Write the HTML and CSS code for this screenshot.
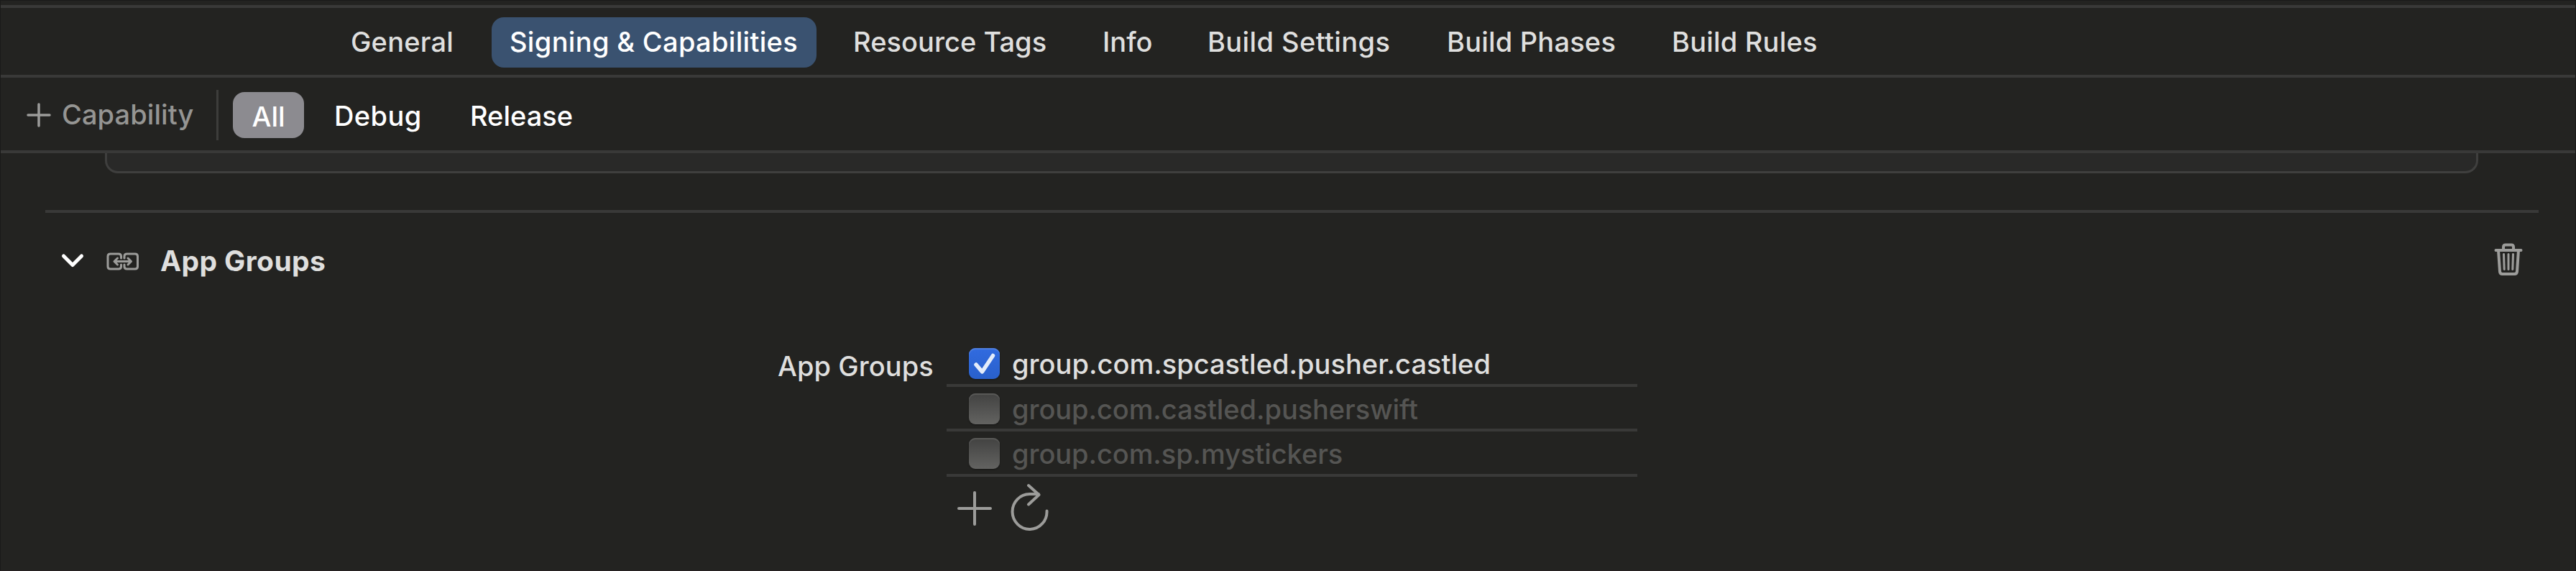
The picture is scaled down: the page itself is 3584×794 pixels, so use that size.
FILE: index.html
```html
<!DOCTYPE html>
<html lang="en">
<head>
<meta charset="utf-8">
<title>Signing &amp; Capabilities</title>
<link rel="stylesheet" href="styles.css">
</head>
<body>
<main class="window">
  <nav class="tabs">
    <span class="tab general">General</span>
    <span class="tab selected">Signing &amp; Capabilities</span>
    <span class="tab resource">Resource Tags</span>
    <span class="tab info">Info</span>
    <span class="tab settings">Build Settings</span>
    <span class="tab phases">Build Phases</span>
    <span class="tab rules">Build Rules</span>
  </nav>
  <div class="toolbar">
    <button class="add-capability">
      <svg width="34" height="34" viewBox="0 0 34 34"><path d="M17 2V32M2 17H32"/></svg>
      <span>Capability</span>
    </button>
    <i class="divider"></i>
    <span class="scope all">All</span>
    <span class="scope debug">Debug</span>
    <span class="scope">Release</span>
  </div>
  <div class="scroll">
    <div class="previous-card"></div>
    <section class="capability">
      <header class="heading">
        <svg class="chevron" width="34" height="24" viewBox="0 0 34 24"><path d="M4.5 5L17 17.5L29.500 5"/></svg>
        <svg class="link" width="46" height="26" viewBox="0 0 46 26">
          <path d="M20.500 8V5.500Q20.500 2 17 2H5.500Q2 2 2 5.500V19.500Q2 23 5.500 23H17Q20.500 23 20.500 19.500V17M25 8V5.500Q25 2 28.500 2H40Q43.500 2 43.500 5.500V19.500Q43.500 23 40 23H28.500Q25 23 25 19.500V17"/>
          <path d="M11 12.500H34.500M15.500 8L11 12.500L15.500 17M30 8L34.500 12.500L30 17"/>
        </svg>
        <h2>App Groups</h2>
        <svg class="trash" width="40" height="46" viewBox="0 0 40 46">
          <path class="frame" d="M2.500 10H37.500M13 10V5.500Q13 2.500 16 2.500H24Q27 2.500 27 5.500V10M6 10L8 39.500Q8.300 43 11.500 43H28.500Q31.700 43 32 39.500L34 10"/>
          <path class="ribs" d="M13.500 15.500L14.200 36.500M20 15.500V36.500M26.500 15.500L25.800 36.500"/>
        </svg>
      </header>
      <div class="form">
        <span class="label">App Groups</span>
        <div class="groups">
          <label class="group enabled">
            <span class="box checked"><svg width="43" height="43" viewBox="0 0 43 43"><path d="M10 23L18.500 33L33.500 10.500"/></svg></span>
            <span class="name">group.com.spcastled.pusher.castled</span>
          </label>
          <label class="group">
            <span class="box"></span>
            <span class="name">group.com.castled.pusherswift</span>
          </label>
          <label class="group">
            <span class="box"></span>
            <span class="name">group.com.sp.mystickers</span>
          </label>
          <div class="actions">
            <svg width="50" height="50" viewBox="0 0 50 50"><path d="M25 3V47M3 25H47"/></svg>
            <svg class="refresh" width="56" height="66" viewBox="0 0 56 66"><path d="M51.500 38.500A24 24.500 0 1 1 27.500 15H40M26 3L40.500 16L26 29.500"/></svg>
          </div>
        </div>
      </div>
    </section>
  </div>
</main>
</body>
</html>
```
FILE: styles.css
```css
* { box-sizing: border-box; }
body {
  margin: 0;
  background: #232321;
  color: #dfdfde;
  font: 500 38px/50px Inter, "Liberation Sans", sans-serif;
}
svg { display: block; flex: none; fill: none; stroke: #9c9c9a; stroke-width: 4; stroke-linecap: round; stroke-linejoin: round; }
.window { position: relative; height: 794px; padding-top: 7px; overflow: hidden; }
.window::after {
  content: "";
  position: absolute;
  inset: 0;
  border: 1px solid #1a1a19;
  border-bottom-color: #292123;
  pointer-events: none;
}

.tabs {
  display: grid;
  grid-template-columns: 196px 503px 347px 146px 333px 313px 300px;
  align-items: center;
  height: 101px;
  padding: 3px 0 0 488px;
  border-top: 4px solid #393938;
  border-bottom: 4px solid #393938;
}
.tab { height: 70px; line-height: 69px; white-space: nowrap; letter-spacing: .2px; }
.selected {
  width: 452px;
  padding-left: 25px;
  border-radius: 17px;
  background: #3a5270;
  color: #fff;
  letter-spacing: .32px;
}
.resource { letter-spacing: .04px; }
.info { letter-spacing: 0; }
.settings { letter-spacing: .4px; }

.toolbar {
  display: flex;
  align-items: center;
  height: 105px;
  padding: 0 0 1px 37px;
  border-bottom: 4px solid #393938;
  color: #fff;
}
.add-capability {
  display: flex;
  align-items: center;
  gap: 15px;
  width: 264px;
  margin: 0;
  padding: 0;
  border: 0;
  background: none;
  color: #959593;
  font: inherit;
  letter-spacing: .08px;
}
.add-capability span { margin-top: 2px; }
.add-capability svg { margin-top: 3px; stroke-width: 3.500; }
.divider { width: 3px; height: 70px; margin-top: 3px; background: #3d3d3b; }
.scope { margin-top: 6px; }
.all {
  width: 99px;
  height: 64px;
  margin: 3px 0 0 20px;
  border-radius: 16px;
  background: #8c8b90;
  line-height: 68px;
  text-align: center;
}
.debug { width: 189px; margin-left: 42px; letter-spacing: .4px; }

.previous-card {
  height: 28px;
  margin: 0 136px 0 146px;
  border: 3px solid #3f3f3e;
  border-top: 0;
  border-radius: 0 0 18px 18px;
  background: #292928;
}
.capability { margin: 51px 52px 0 63px; border-top: 4px solid #393938; }
.heading { display: flex; align-items: center; height: 134px; padding: 0 22px 0 21px; }
.chevron { stroke: #fff; stroke-width: 5; }
.link { margin: 2px 0 0 30px; stroke-width: 3; }
h2 { margin: -1px auto 0 29px; font-size: 39px; font-weight: 700; line-height: 50px; letter-spacing: .4px; }
.trash { margin-top: -4px; stroke-width: 4; }
.ribs { stroke-width: 3; }

.form { display: flex; padding: 45px 0 0 1019px; }
.label { width: 235px; margin-top: 9px; letter-spacing: .05px; }
.groups { width: 961px; }
.group {
  display: flex;
  align-items: center;
  gap: 17px;
  height: 62.700px;
  padding: 2px 0 0 31px;
  border-bottom: 4px solid #393938;
  color: #555553;
  letter-spacing: -.07px;
}
.name { margin-top: 1px; }
.enabled { color: #dfdfde; letter-spacing: .02px; }
.box {
  width: 43px;
  height: 43px;
  border-radius: 9px;
  background: linear-gradient(#424241, #636361);
  box-shadow: inset 0 2px 1px #5a5a58, 0 1px 2px #171716;
}
.checked { background: linear-gradient(#316be0, #2960cb); box-shadow: inset 0 2px 1px #5080e0, 0 1px 2px #171716; }
.checked svg { stroke: #e4ecfa; stroke-width: 5.500; }
.actions { display: flex; gap: 24px; padding: 9px 0 0 14px; }
.actions svg:first-child { margin-top: 10px; }
```
